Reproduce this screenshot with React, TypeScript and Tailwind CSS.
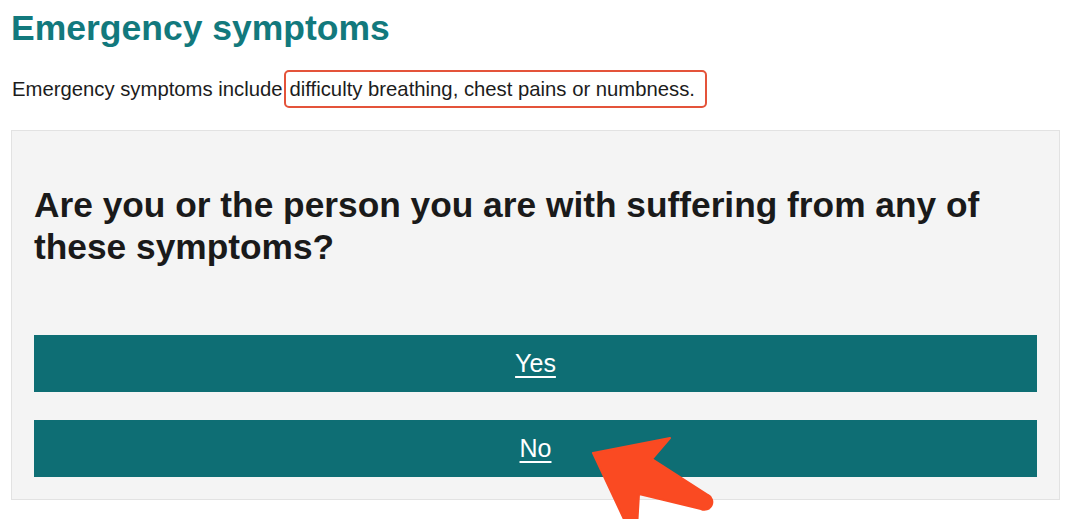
import React from "react";

function AnswerButton({ label }: { label: string }) {
  return (
    <a
      href="#"
      className="flex h-[57px] w-full items-center justify-center bg-[#0e6e74] text-[25px] text-white underline underline-offset-[4px] decoration-[2px]"
    >
      {label}
    </a>
  );
}

function PointerArrow() {
  // annotation arrow drawn over the "No" button
  return (
    <svg
      className="pointer-events-none absolute left-0 top-0"
      width={1080}
      height={519}
      viewBox="0 0 1080 519"
    >
      <path
        d="M593 453 L670 438 L652 459 L708 495 A7.5 7.5 0 0 1 701 509 L639 494 L636 545 Z"
        fill="#fa4a22"
        stroke="#fa4a22"
        strokeWidth={2}
        strokeLinejoin="round"
      />
    </svg>
  );
}

export default function App() {
  return (
    <div className="relative h-[519px] overflow-hidden bg-white px-[11px] font-['Liberation_Sans',Arial,sans-serif] text-[#1c1c1c]">
      <h1 className="pt-[7px] text-[35.5px] font-bold leading-[42px] text-[#12797d]">
        Emergency symptoms
      </h1>
      <p className="ml-[1px] mt-[26px] text-[20.3px] leading-[28px]">
        Emergency symptoms include
        <span className="ml-[1px] rounded-[5px] border-[2.5px] border-[#e4533a] py-[6px] pl-[4px] pr-[10px]">
          difficulty breathing, chest pains or numbness.
        </span>
      </p>

      <div className="mt-[27px] w-[1049px] border border-[#e2e2e2] bg-[#f4f4f4] px-[22px] pb-[22px] pt-[53px]">
        <h2 className="text-[35.3px] font-bold leading-[42px] text-[#1a1a1a]">
          Are you or the person you are with suffering from any of these
          symptoms?
        </h2>
        <div className="mt-[67px] flex flex-col gap-[28px]">
          <AnswerButton label="Yes" />
          <AnswerButton label="No" />
        </div>
      </div>

      <PointerArrow />
    </div>
  );
}
